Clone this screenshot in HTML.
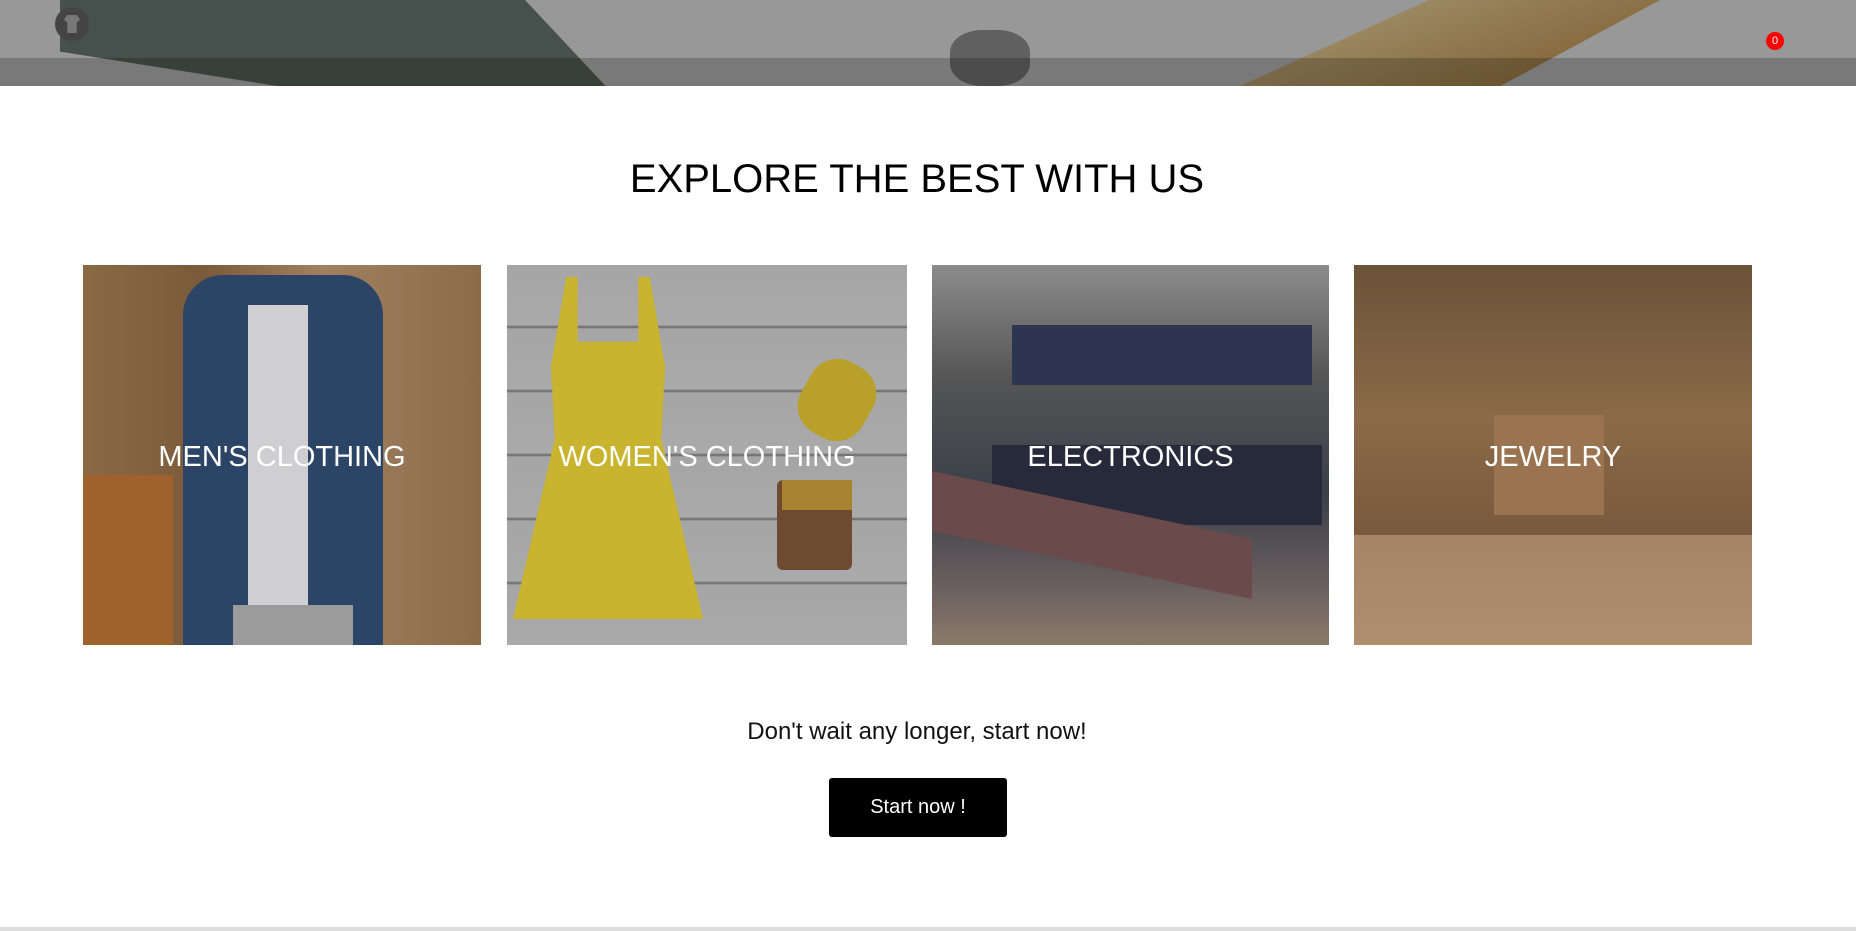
<!DOCTYPE html>
<html><head><meta charset="utf-8">
<style>
*{margin:0;padding:0;box-sizing:border-box}
body{width:1856px;height:931px;background:#fff;position:relative;overflow:hidden;font-family:"Liberation Sans",sans-serif}
.hdr{position:absolute;left:0;top:0;width:1856px;height:86px;background:#989898;overflow:hidden}
.hdr .band{position:absolute;left:0;top:58px;width:100%;height:28px;background:rgba(0,0,0,.2)}
.logo{position:absolute;left:55px;top:7px;width:34px;height:34px;border-radius:50%;background:#444}
.logo:after{content:"";position:absolute;left:9px;top:8px;width:16px;height:18px;background:#777;clip-path:polygon(20% 0,80% 0,100% 25%,85% 40%,80% 35%,80% 100%,20% 100%,20% 35%,15% 40%,0 25%)}
.badge{position:absolute;left:1766px;top:32px;width:18px;height:18px;border-radius:50%;background:#f00;color:#fff;font-size:11px;text-align:center;line-height:18px}
h1{position:absolute;left:0;width:1834px;top:157px;text-align:center;font-weight:normal;font-size:40px;color:#000}
.card{position:absolute;top:265px;height:380px;overflow:hidden}
.lbl{position:absolute;left:0;right:0;top:176px;text-align:center;color:#fff;font-size:29px;}
.c1{left:83px;width:398px;background:linear-gradient(90deg,#8a6a45 0%,#7a5a3a 30%,#a08060 60%,#8b6b4a 100%)}
.c2{left:507px;width:400px;background:repeating-linear-gradient(180deg,#a5a5a5 0,#aaa 60px,#666 62px,#a5a5a5 64px)}
.c3{left:932px;width:397px;background:linear-gradient(180deg,#8c8c8c 0%,#555 30%,#3a3f48 60%,#6b6060 85%,#8a7a6a 100%)}
.c4{left:1354px;width:398px;background:linear-gradient(180deg,#6b5338 0%,#8a6a48 40%,#7a5a3c 70%,#a88a68 100%)}
.p{position:absolute}
.cta{position:absolute;left:0;width:1834px;top:718px;text-align:center;font-size:24px;color:#111}
.btn{position:absolute;left:829px;top:778px;width:178px;height:59px;background:#000;border-radius:3px;color:#fff;font-size:20px;text-align:center;line-height:59px}
.foot{position:absolute;left:0;top:927px;width:1856px;height:4px;background:#ddd}
</style></head><body>
<div class="hdr">
<div class="p" style="left:60px;top:0;width:620px;height:86px;background:#46504c;clip-path:polygon(0 0,75% 0,88% 100%,35% 100%,0 60%)"></div>
<div class="p" style="left:950px;top:30px;width:80px;height:56px;background:#3a3a3a;border-radius:40%;opacity:.6"></div>
<div class="p" style="left:1240px;top:0;width:420px;height:86px;background:linear-gradient(160deg,#a89a78,#7a5a2a);clip-path:polygon(45% 0,100% 0,62% 100%,0 100%)"></div>
<div class="band"></div>
<div class="logo"></div>
<div class="badge">0</div>
</div>
<h1>EXPLORE THE BEST WITH US</h1>

<div class="card c1">
<div class="p" style="left:0;top:210px;width:90px;height:170px;background:#a0622c"></div>
<div class="p" style="left:100px;top:10px;width:200px;height:370px;background:#2c4566;border-radius:40px 40px 0 0"></div>
<div class="p" style="left:165px;top:40px;width:60px;height:300px;background:#cfcfd2"></div>
<div class="p" style="left:150px;top:340px;width:120px;height:40px;background:#9b9b9b"></div>
<div class="lbl">MEN'S CLOTHING</div>
</div>
<div class="card c2">
<div class="p" style="left:6px;top:12px;width:190px;height:360px;background:#c8b42e;clip-path:polygon(28% 0,34% 0,34% 18%,66% 18%,66% 0,72% 0,80% 25%,78% 45%,100% 95%,0 95%,22% 45%,20% 25%)"></div>
<div class="p" style="left:270px;top:215px;width:75px;height:90px;background:#6e4a30;border-radius:6px"></div>
<div class="p" style="left:275px;top:215px;width:70px;height:30px;background:#a88430"></div>
<div class="p" style="left:295px;top:95px;width:70px;height:80px;background:#b8a02a;border-radius:30px;transform:rotate(30deg)"></div>
<div class="lbl">WOMEN'S CLOTHING</div>
</div>
<div class="card c3">
<div class="p" style="left:80px;top:60px;width:300px;height:60px;background:#2d3550"></div>
<div class="p" style="left:60px;top:180px;width:330px;height:80px;background:#262a3a"></div>
<div class="p" style="left:0;top:240px;width:320px;height:60px;background:#6a4a4a;transform:skewY(12deg)"></div>
<div class="lbl">ELECTRONICS</div>
</div>
<div class="card c4">
<div class="p" style="left:0;top:270px;width:398px;height:110px;background:#b09070;opacity:.8"></div>
<div class="p" style="left:140px;top:150px;width:110px;height:100px;background:#9a7450"></div>
<div class="lbl">JEWELRY</div>
</div>

<div class="cta">Don't wait any longer, start now!</div>
<div class="btn">Start now !</div>
<div class="foot"></div>
</body></html>
